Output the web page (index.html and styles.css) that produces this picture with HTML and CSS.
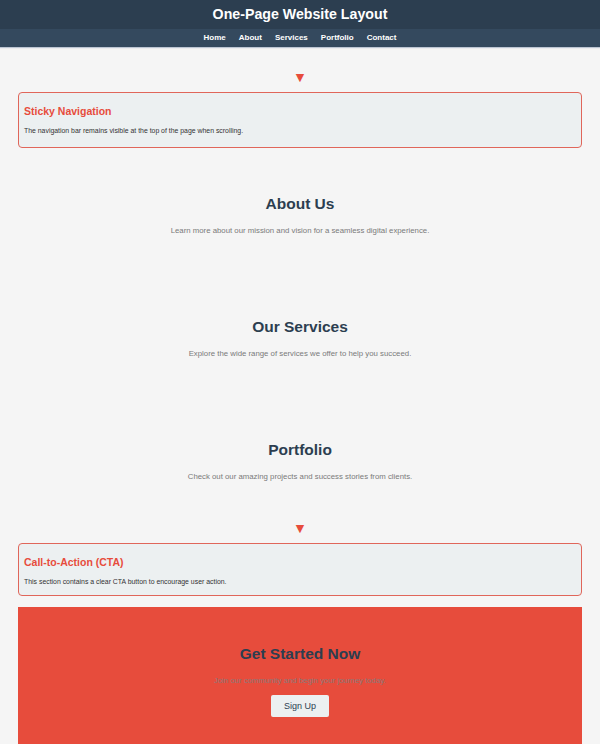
FILE: index.html
```html
<!DOCTYPE html>
<html lang="en">
<head>
<meta charset="utf-8">
<title>One-Page Website Layout</title>
<link rel="stylesheet" href="styles.css">
</head>
<body>
<header class="site-header">
  <h1 class="site-title">One-Page Website Layout</h1>
  <nav class="site-nav">
    <a href="#" class="nav-link">Home</a>
    <a href="#" class="nav-link">About</a>
    <a href="#" class="nav-link">Services</a>
    <a href="#" class="nav-link">Portfolio</a>
    <a href="#" class="nav-link">Contact</a>
  </nav>
</header>
<main class="page">
  <div class="arrow arrow-first">&#9660;</div>
  <div class="note">
    <h3 class="note-title">Sticky Navigation</h3>
    <p class="note-text">The navigation bar remains visible at the top of the page when scrolling.</p>
  </div>

  <section class="section section-first">
    <h2 class="section-title">About Us</h2>
    <p class="section-text">Learn more about our mission and vision for a seamless digital experience.</p>
  </section>
  <section class="section">
    <h2 class="section-title">Our Services</h2>
    <p class="section-text">Explore the wide range of services we offer to help you succeed.</p>
  </section>
  <section class="section">
    <h2 class="section-title">Portfolio</h2>
    <p class="section-text">Check out our amazing projects and success stories from clients.</p>
  </section>

  <div class="arrow">&#9660;</div>
  <div class="note note-cta">
    <h3 class="note-title">Call-to-Action (CTA)</h3>
    <p class="note-text">This section contains a clear CTA button to encourage user action.</p>
  </div>

  <section class="cta">
    <h2 class="cta-title">Get Started Now</h2>
    <p class="cta-text">Join our community and begin your journey today.</p>
    <button class="cta-button" type="button">Sign Up</button>
  </section>
</main>
</body>
</html>
```

FILE: styles.css
```css
* { box-sizing: border-box; }
html, body { margin: 0; padding: 0; }
body {
  background: #f5f5f5;
  font-family: "Liberation Sans", Arial, sans-serif;
  color: #333;
  height: 744px;
  overflow: hidden;
}
.site-header {
  box-shadow: 0 1px 1px rgba(120, 140, 170, 0.45);
}
.site-title {
  margin: 0;
  height: 29px;
  background: #2c3e50;
  color: #fff;
  font-size: 14.2px;
  font-weight: bold;
  line-height: 29px;
  text-align: center;
}
.site-nav {
  height: 18px;
  background: #34495e;
  display: flex;
  justify-content: center;
  align-items: center;
  gap: 13px;
}
.nav-link {
  color: #fff;
  text-decoration: none;
  font-size: 8px;
  font-weight: bold;
  line-height: 18px;
}
.page {
  padding: 0 18px;
}
.arrow {
  color: #e74c3c;
  text-align: center;
  font-size: 11px;
  line-height: 12px;
  height: 12px;
  margin: 0 0 8px;
  font-family: "DejaVu Sans", sans-serif;
}
.arrow-first { margin-top: 25px; }
.note {
  background: #ecf0f1;
  border: 1px solid #e0665a;
  border-radius: 4px;
  padding: 12px 5px 12px;
}
.note-cta { padding: 12px 5px 9px; }
.note-title {
  margin: 0;
  color: #e74c3c;
  font-size: 10.5px;
  font-weight: bold;
  line-height: 13px;
}
.note-text {
  margin: 8px 0 0;
  font-size: 6.9px;
  line-height: 9px;
  color: #333;
}
.section {
  text-align: center;
  padding: 41px 0 41px;
}
.section-first { padding-top: 47px; }
.section-title {
  margin: 0;
  color: #2c3e50;
  font-size: 15.5px;
  font-weight: bold;
  line-height: 18px;
}
.section-text {
  margin: 13px 0 0;
  font-size: 7.8px;
  line-height: 10px;
  color: #7a7a7a;
}
.cta {
  margin-top: 11px;
  background: #e74c3c;
  text-align: center;
  padding: 38px 0 39px;
}
.cta-title {
  margin: 0;
  color: #2c3e50;
  font-size: 15.5px;
  font-weight: bold;
  line-height: 18px;
}
.cta-text {
  margin: 13px 0 0;
  font-size: 7.8px;
  line-height: 10px;
  color: #8a7a7a;
}
.cta-button {
  margin-top: 9px;
  width: 58px;
  height: 22px;
  background: #ecf0f1;
  color: #2c3e50;
  border: none;
  border-radius: 2px;
  font-family: "Liberation Sans", Arial, sans-serif;
  font-size: 9px;
  padding: 0;
}
```
